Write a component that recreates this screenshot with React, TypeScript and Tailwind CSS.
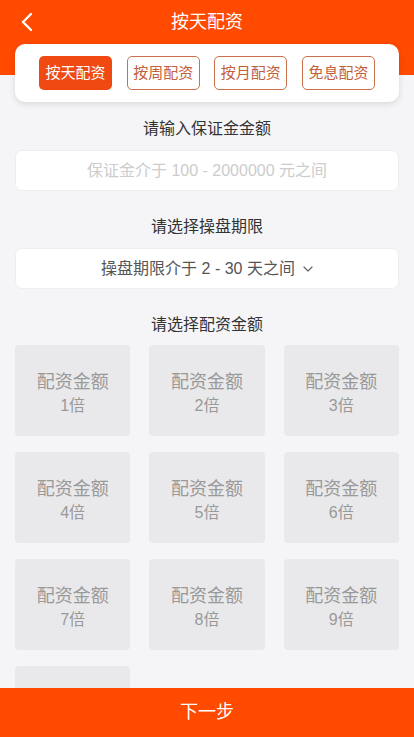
import React from 'react';

const tabs = ['按天配资', '按周配资', '按月配资', '免息配资'];
const multiples = [1, 2, 3, 4, 5, 6, 7, 8, 9, 10];

const App: React.FC = () => {
  return (
    <div
      className="relative h-[737px] w-[414px] overflow-hidden bg-[#f5f5f8]"
      style={{ fontFamily: '"Liberation Sans", "Noto Sans CJK SC", sans-serif' }}
    >
      {/* Header */}
      <div className="h-[75px] bg-[#ff4a00]">
        <div className="relative flex h-[44px] items-center justify-center">
          <svg
            className="absolute left-[20px] top-[12px]"
            width="14"
            height="20"
            viewBox="0 0 14 20"
            fill="none"
          >
            <path d="M11 2 L3 10 L11 18" stroke="#fff" strokeWidth="2.4" strokeLinecap="round" strokeLinejoin="round" />
          </svg>
          <span className="text-[18px] text-white">按天配资</span>
        </div>
      </div>

      {/* Tabs card */}
      <div className="mx-[15px] -mt-[31px] flex h-[58px] items-center justify-between rounded-[10px] bg-white px-[24px] shadow-[0_2px_6px_rgba(0,0,0,0.12)]">
        {tabs.map((t, i) => (
          <div
            key={t}
            className={
              i === 0
                ? 'flex h-[34px] w-[73px] items-center justify-center rounded-[5px] bg-[#f04a12] text-[15px] text-white'
                : 'flex h-[34px] w-[73px] items-center justify-center rounded-[5px] border border-[#c9714c] text-[15px] text-[#c2603a]'
            }
          >
            {t}
          </div>
        ))}
      </div>

      {/* Form */}
      <div className="px-[15px]">
        <div className="mt-[15px] text-center text-[16px] leading-[24px] text-[#333]">请输入保证金金额</div>
        <div className="mt-[9px] flex h-[41px] items-center justify-center rounded-[7px] border border-[#eeeef0] bg-white text-[16px] text-[#cccccc]">
          保证金介于 100 - 2000000 元之间
        </div>

        <div className="mt-[24px] text-center text-[16px] leading-[24px] text-[#333]">请选择操盘期限</div>
        <div className="mt-[9px] flex h-[41px] items-center justify-center gap-[8px] rounded-[7px] border border-[#eeeef0] bg-white text-[16px] text-[#555]">
          <span>操盘期限介于 2 - 30 天之间</span>
          <svg width="10" height="6" viewBox="0 0 10 6" fill="none">
            <path d="M1 1 L5 5 L9 1" stroke="#666" strokeWidth="1.2" strokeLinecap="round" strokeLinejoin="round" />
          </svg>
        </div>

        <div className="mt-[24px] text-center text-[16px] leading-[24px] text-[#333]">请选择配资金额</div>
        <div className="mt-[8px] grid grid-cols-3 gap-x-[19px] gap-y-[16px]">
          {multiples.map((m) => (
            <div
              key={m}
              className="flex h-[91px] flex-col items-center justify-center rounded-[4px] bg-[#e9e9eb] pt-[6px] text-[#999]"
            >
              <span className="text-[18px] leading-[24px]">配资金额</span>
              <span className="text-[16px] leading-[24px]">{m}倍</span>
            </div>
          ))}
        </div>
      </div>

      {/* Bottom button */}
      <div className="absolute bottom-0 left-0 flex h-[49px] w-full items-center justify-center bg-[#ff4a00] text-[18px] text-white">
        下一步
      </div>
    </div>
  );
};

export default App;
